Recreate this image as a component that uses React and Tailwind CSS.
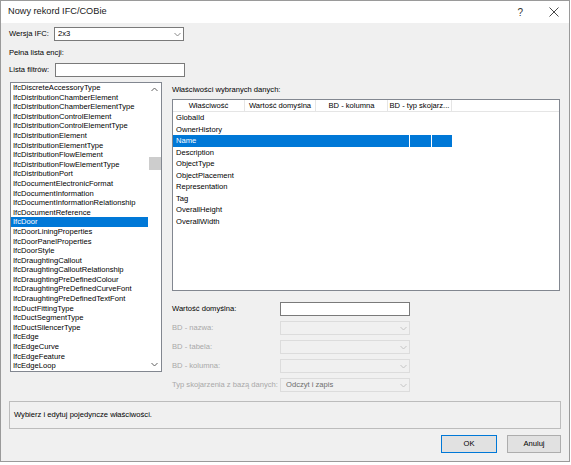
import React from 'react';

const entities = [
  'IfcDiscreteAccessoryType',
  'IfcDistributionChamberElement',
  'IfcDistributionChamberElementType',
  'IfcDistributionControlElement',
  'IfcDistributionControlElementType',
  'IfcDistributionElement',
  'IfcDistributionElementType',
  'IfcDistributionFlowElement',
  'IfcDistributionFlowElementType',
  'IfcDistributionPort',
  'IfcDocumentElectronicFormat',
  'IfcDocumentInformation',
  'IfcDocumentInformationRelationship',
  'IfcDocumentReference',
  'IfcDoor',
  'IfcDoorLiningProperties',
  'IfcDoorPanelProperties',
  'IfcDoorStyle',
  'IfcDraughtingCallout',
  'IfcDraughtingCalloutRelationship',
  'IfcDraughtingPreDefinedColour',
  'IfcDraughtingPreDefinedCurveFont',
  'IfcDraughtingPreDefinedTextFont',
  'IfcDuctFittingType',
  'IfcDuctSegmentType',
  'IfcDuctSilencerType',
  'IfcEdge',
  'IfcEdgeCurve',
  'IfcEdgeFeature',
  'IfcEdgeLoop',
];

const properties = [
  'GlobalId',
  'OwnerHistory',
  'Name',
  'Description',
  'ObjectType',
  'ObjectPlacement',
  'Representation',
  'Tag',
  'OverallHeight',
  'OverallWidth',
];

const columns = [
  { label: 'Właściwość', w: 'w-[72px]' },
  { label: 'Wartość domyślna', w: 'w-[71px]' },
  { label: 'BD - kolumna', w: 'w-[72px]' },
  { label: 'BD - typ skojarz...', w: 'w-[64px]' },
];

const Chevron = ({ dir = 'down', color = '#606060' }) => (
  <svg width="7" height="5" viewBox="0 0 7 5">
    <polyline
      points={dir === 'down' ? '0.5,1 3.5,4 6.5,1' : '0.5,4 3.5,1 6.5,4'}
      fill="none"
      stroke={color}
      strokeWidth="1"
    />
  </svg>
);

const DisabledCombo = ({ value }) => (
  <div className="w-[130px] h-[14px] border border-[#dcdcdc] bg-[#f0f0f0] flex">
    <div className="flex-1 pl-[5px] leading-[12px] text-[#6d6d6d]">{value}</div>
    <div className="w-[12px] flex items-center justify-center">
      <Chevron color="#c4c4c4" />
    </div>
  </div>
);

const App = () => {
  return (
    <div className="w-[571px] h-[465px] bg-white font-['Liberation_Sans',Arial,sans-serif] text-[7.6px] text-black">
      <div className="w-[570px] h-[462px] border border-[#9a9a9a] flex flex-col">
        {/* Title bar */}
        <div className="h-[22px] bg-white flex items-center pl-[7px] pr-[10px]">
          <span className="text-[9.2px] text-[#1a1a1a]">Nowy rekord IFC/COBie</span>
          <span className="ml-auto text-[10px] text-[#333]">?</span>
          <svg className="ml-[26px]" width="10" height="10" viewBox="0 0 10 10">
            <path d="M0.5 0.5 L9.5 9.5 M9.5 0.5 L0.5 9.5" stroke="#333" strokeWidth="0.9" />
          </svg>
        </div>

        {/* Body */}
        <div className="flex-1 bg-[#f0f0f0] pl-[8px] pr-[8px] flex flex-col">
          <div className="mt-[4px] h-[14px] flex items-center">
            <span className="w-[45px]">Wersja IFC:</span>
            <div className="w-[130px] h-[14px] border border-[#7a7a7a] bg-white flex">
              <div className="flex-1 pl-[3px] leading-[12px]">2x3</div>
              <div className="w-[12px] flex items-center justify-center">
                <Chevron color="#8a8a8a" />
              </div>
            </div>
          </div>

          <div className="mt-[7px] h-[10px] leading-[10px]">Pełna lista encji:</div>

          <div className="mt-[5px] h-[14px] flex items-center">
            <span className="w-[46px]">Lista filtrów:</span>
            <div className="w-[130px] h-[14px] border border-[#7a7a7a] bg-white"></div>
          </div>

          {/* Main area */}
          <div className="mt-[5px] flex items-start">
            {/* Entity list */}
            <div className="ml-[1px] w-[152px] h-[290px] border border-[#828790] bg-white flex">
              <div className="flex-1 overflow-hidden">
                {entities.map((name) => (
                  <div
                    key={name}
                    className={`h-[9.6px] leading-[9.6px] pl-[2px] whitespace-nowrap ${
                      name === 'IfcDoor' ? 'bg-[#0078d7] text-white' : ''
                    }`}
                  >
                    {name}
                  </div>
                ))}
              </div>
              <div className="w-[13px] flex flex-col">
                <div className="h-[13px] flex items-center justify-center">
                  <Chevron dir="up" />
                </div>
                <div className="flex-1 pt-[61px] flex justify-center">
                  <div className="w-[12px] h-[13px] bg-[#cdcdcd]"></div>
                </div>
                <div className="h-[13px] flex items-center justify-center">
                  <Chevron />
                </div>
              </div>
            </div>

            {/* Properties */}
            <div className="ml-[10px] w-[388px] flex flex-col">
              <div className="mt-[3px] h-[10px] leading-[10px]">Właściwości wybranych danych:</div>
              <div className="mt-[4px] h-[192px] border border-[#828790] bg-white">
                <div className="h-[12px] flex border-b border-[#e5e5e5]">
                  {columns.map((c) => (
                    <div
                      key={c.label}
                      className={`${c.w} border-r border-[#e5e5e5] text-center leading-[12px] whitespace-nowrap overflow-hidden`}
                    >
                      {c.label}
                    </div>
                  ))}
                </div>
                {properties.map((p) => (
                  <div
                    key={p}
                    className={`h-[11.5px] leading-[11.5px] w-[279px] flex ${
                      p === 'Name' ? 'bg-[#0078d7] text-white' : ''
                    }`}
                  >
                    <div className="w-[236px] pl-[3px]">{p}</div>
                    {p === 'Name' && (
                      <>
                        <div className="w-[22px] border-l border-white"></div>
                        <div className="flex-1 border-l border-white"></div>
                      </>
                    )}
                  </div>
                ))}
              </div>

              <div className="mt-[11px] h-[14px] flex items-center">
                <span className="w-[108px]">Wartość domyślna:</span>
                <div className="w-[130px] h-[14px] border border-[#7a7a7a] bg-white"></div>
              </div>
              <div className="mt-[5px] flex items-center text-[#a8a8a8]">
                <span className="w-[108px]">BD - nazwa:</span>
                <DisabledCombo />
              </div>
              <div className="mt-[5px] flex items-center text-[#a8a8a8]">
                <span className="w-[108px]">BD - tabela:</span>
                <DisabledCombo />
              </div>
              <div className="mt-[5px] flex items-center text-[#a8a8a8]">
                <span className="w-[108px]">BD - kolumna:</span>
                <DisabledCombo />
              </div>
              <div className="mt-[5px] flex items-center text-[#a8a8a8]">
                <span className="w-[108px] whitespace-nowrap">Typ skojarzenia z bazą danych:</span>
                <DisabledCombo value="Odczyt i zapis" />
              </div>
            </div>
          </div>

          {/* Status */}
          <div className="mt-[9px] h-[28px] border border-[#bcbcbc] flex items-center pl-[4px]">
            Wybierz i edytuj pojedyncze właściwości.
          </div>

          {/* Buttons */}
          <div className="mt-[6px] flex justify-end gap-[10px]">
            <button className="w-[56px] h-[18px] border border-[#0078d7] bg-[#e1e1e1] text-[7.6px]">OK</button>
            <button className="w-[54px] h-[18px] border border-[#adadad] bg-[#e1e1e1] text-[7.6px]">Anuluj</button>
          </div>
        </div>
      </div>
    </div>
  );
};

export default App;
